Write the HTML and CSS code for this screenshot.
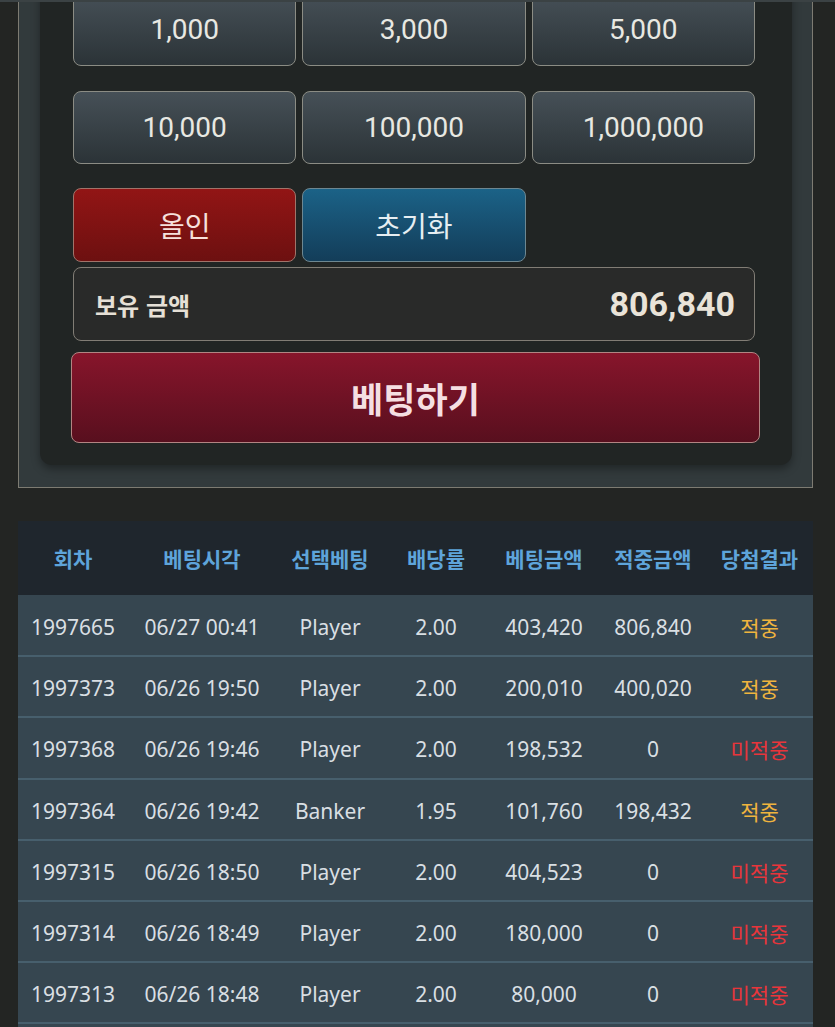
FILE: index.html
```html
<!DOCTYPE html>
<html lang="ko">
<head>
    <meta charset="UTF-8">
    <meta name="viewport" content="width=device-width, initial-scale=1.0">
    <title>베팅</title>
    <link rel="stylesheet" href="styles.css">
</head>
<body>

    <div class="topline"></div>

    <div class="page">
        <section class="bet-panel">
            <div class="bet-card">
                <div class="chips">
                    <button class="chip">1,000</button>
                    <button class="chip">3,000</button>
                    <button class="chip">5,000</button>
                    <button class="chip">10,000</button>
                    <button class="chip">100,000</button>
                    <button class="chip">1,000,000</button>
                </div>

                <div class="actions">
                    <button class="chip chip-red">올인</button>
                    <button class="chip chip-blue">초기화</button>
                </div>

                <div class="balance">
                    <span class="balance-label">보유 금액</span>
                    <span class="balance-value">806,840</span>
                </div>

                <button class="bet-btn">베팅하기</button>
            </div>
        </section>

        <table class="history">
            <colgroup>
                <col style="width:110px">
                <col style="width:148px">
                <col style="width:108px">
                <col style="width:104px">
                <col style="width:112px">
                <col style="width:106px">
                <col style="width:107px">
            </colgroup>
            <thead>
                <tr>
                    <th>회차</th>
                    <th>베팅시각</th>
                    <th>선택베팅</th>
                    <th>배당률</th>
                    <th>베팅금액</th>
                    <th>적중금액</th>
                    <th>당첨결과</th>
                </tr>
            </thead>
            <tbody>
                <tr>
                    <td>1997665</td><td>06/27 00:41</td><td>Player</td><td>2.00</td><td>403,420</td><td>806,840</td><td class="win">적중</td>
                </tr>
                <tr>
                    <td>1997373</td><td>06/26 19:50</td><td>Player</td><td>2.00</td><td>200,010</td><td>400,020</td><td class="win">적중</td>
                </tr>
                <tr>
                    <td>1997368</td><td>06/26 19:46</td><td>Player</td><td>2.00</td><td>198,532</td><td>0</td><td class="lose">미적중</td>
                </tr>
                <tr>
                    <td>1997364</td><td>06/26 19:42</td><td>Banker</td><td>1.95</td><td>101,760</td><td>198,432</td><td class="win">적중</td>
                </tr>
                <tr>
                    <td>1997315</td><td>06/26 18:50</td><td>Player</td><td>2.00</td><td>404,523</td><td>0</td><td class="lose">미적중</td>
                </tr>
                <tr>
                    <td>1997314</td><td>06/26 18:49</td><td>Player</td><td>2.00</td><td>180,000</td><td>0</td><td class="lose">미적중</td>
                </tr>
                <tr>
                    <td>1997313</td><td>06/26 18:48</td><td>Player</td><td>2.00</td><td>80,000</td><td>0</td><td class="lose">미적중</td>
                </tr>
                <tr class="filler">
                    <td></td><td></td><td></td><td></td><td></td><td></td><td></td>
                </tr>
            </tbody>
        </table>
    </div>

</body>
</html>
```

FILE: styles.css
```css
* {
    box-sizing: border-box;
}

body {
    margin: 0;
    background-color: #232523;
    font-family: "Noto Sans", "Noto Sans CJK KR", sans-serif;
    overflow: hidden;
}

.topline {
    position: fixed;
    top: 0;
    left: 0;
    right: 0;
    height: 2px;
    background-color: #3b4244;
}

.page {
    padding: 0 22px 0 18px;
}

.bet-panel {
    margin-top: -30px;
    background-color: #323a3c;
    border: 1px solid #7d7b72;
    padding: 0 20px 22px 21px;
}

.bet-card {
    background-color: #212524;
    border-radius: 0 0 12px 12px;
    box-shadow: 0px 4px 8px rgba(0, 0, 0, 0.35);
    padding: 22px 37px 22px 33px;
}

.chips {
    display: grid;
    grid-template-columns: repeat(3, 1fr);
    column-gap: 6px;
    row-gap: 25px;
}

.chip {
    height: 73px;
    border: 1px solid #8b8c84;
    border-radius: 8px;
    background: linear-gradient(to bottom, #465057, #2b3337);
    color: #e8e8e2;
    font-family: Roboto, "Noto Sans CJK KR", sans-serif;
    font-size: 28px;
    padding: 0;
    cursor: pointer;
}

.actions {
    display: grid;
    grid-template-columns: repeat(3, 1fr);
    column-gap: 6px;
    margin-top: 24px;
}

.actions .chip {
    height: 74px;
    font-family: "Noto Sans CJK KR", sans-serif;
    font-size: 28px;
}

.chip-red {
    background: linear-gradient(to bottom, #921515, #6d1010);
    border-color: #a0746a;
    color: #f6e0dc;
}

.chip-blue {
    background: linear-gradient(to bottom, #1b6287, #133d59);
    border-color: #6d8791;
    color: #e6eef2;
}

.balance {
    display: flex;
    justify-content: space-between;
    align-items: center;
    height: 74px;
    margin-top: 5px;
    padding: 0 19px 0 21px;
    background-color: #292a29;
    border: 1px solid #817d75;
    border-radius: 8px;
}

.balance-label {
    color: #e6e0d6;
    font-family: "Noto Sans CJK KR", sans-serif;
    font-size: 24px;
    font-weight: bold;
}

.balance-value {
    color: #e9e3d8;
    font-family: Roboto, sans-serif;
    font-size: 34px;
    font-weight: bold;
}

.bet-btn {
    display: block;
    width: calc(100% + 7px);
    height: 91px;
    margin: 11px -5px 0 -2px;
    background: linear-gradient(to bottom, #87152b, #580f1e);
    border: 1px solid #b28583;
    border-radius: 8px;
    color: #f5dfe2;
    font-family: "Noto Sans CJK KR", sans-serif;
    font-size: 35px;
    font-weight: bold;
    cursor: pointer;
}

.history {
    width: 795px;
    margin-top: 33px;
    border-collapse: collapse;
    table-layout: fixed;
}

.history th {
    height: 74px;
    background-color: #1f262d;
    color: #5ea4da;
    font-family: "Noto Sans CJK KR", sans-serif;
    font-size: 21px;
    font-weight: bold;
    text-align: center;
    padding: 0;
}

.history td {
    height: 61.2px;
    background-color: #364650;
    border-bottom: 2px solid #475f6d;
    color: #d9dfe3;
    font-size: 21px;
    text-align: center;
    padding: 3px 0 0 0;
    white-space: nowrap;
}

.history td.win,
.history td.lose {
    font-family: "Noto Sans CJK KR", sans-serif;
    font-size: 21px;
}

.history td.win {
    color: #f0b43e;
}

.history td.lose {
    color: #e8353b;
}
```
